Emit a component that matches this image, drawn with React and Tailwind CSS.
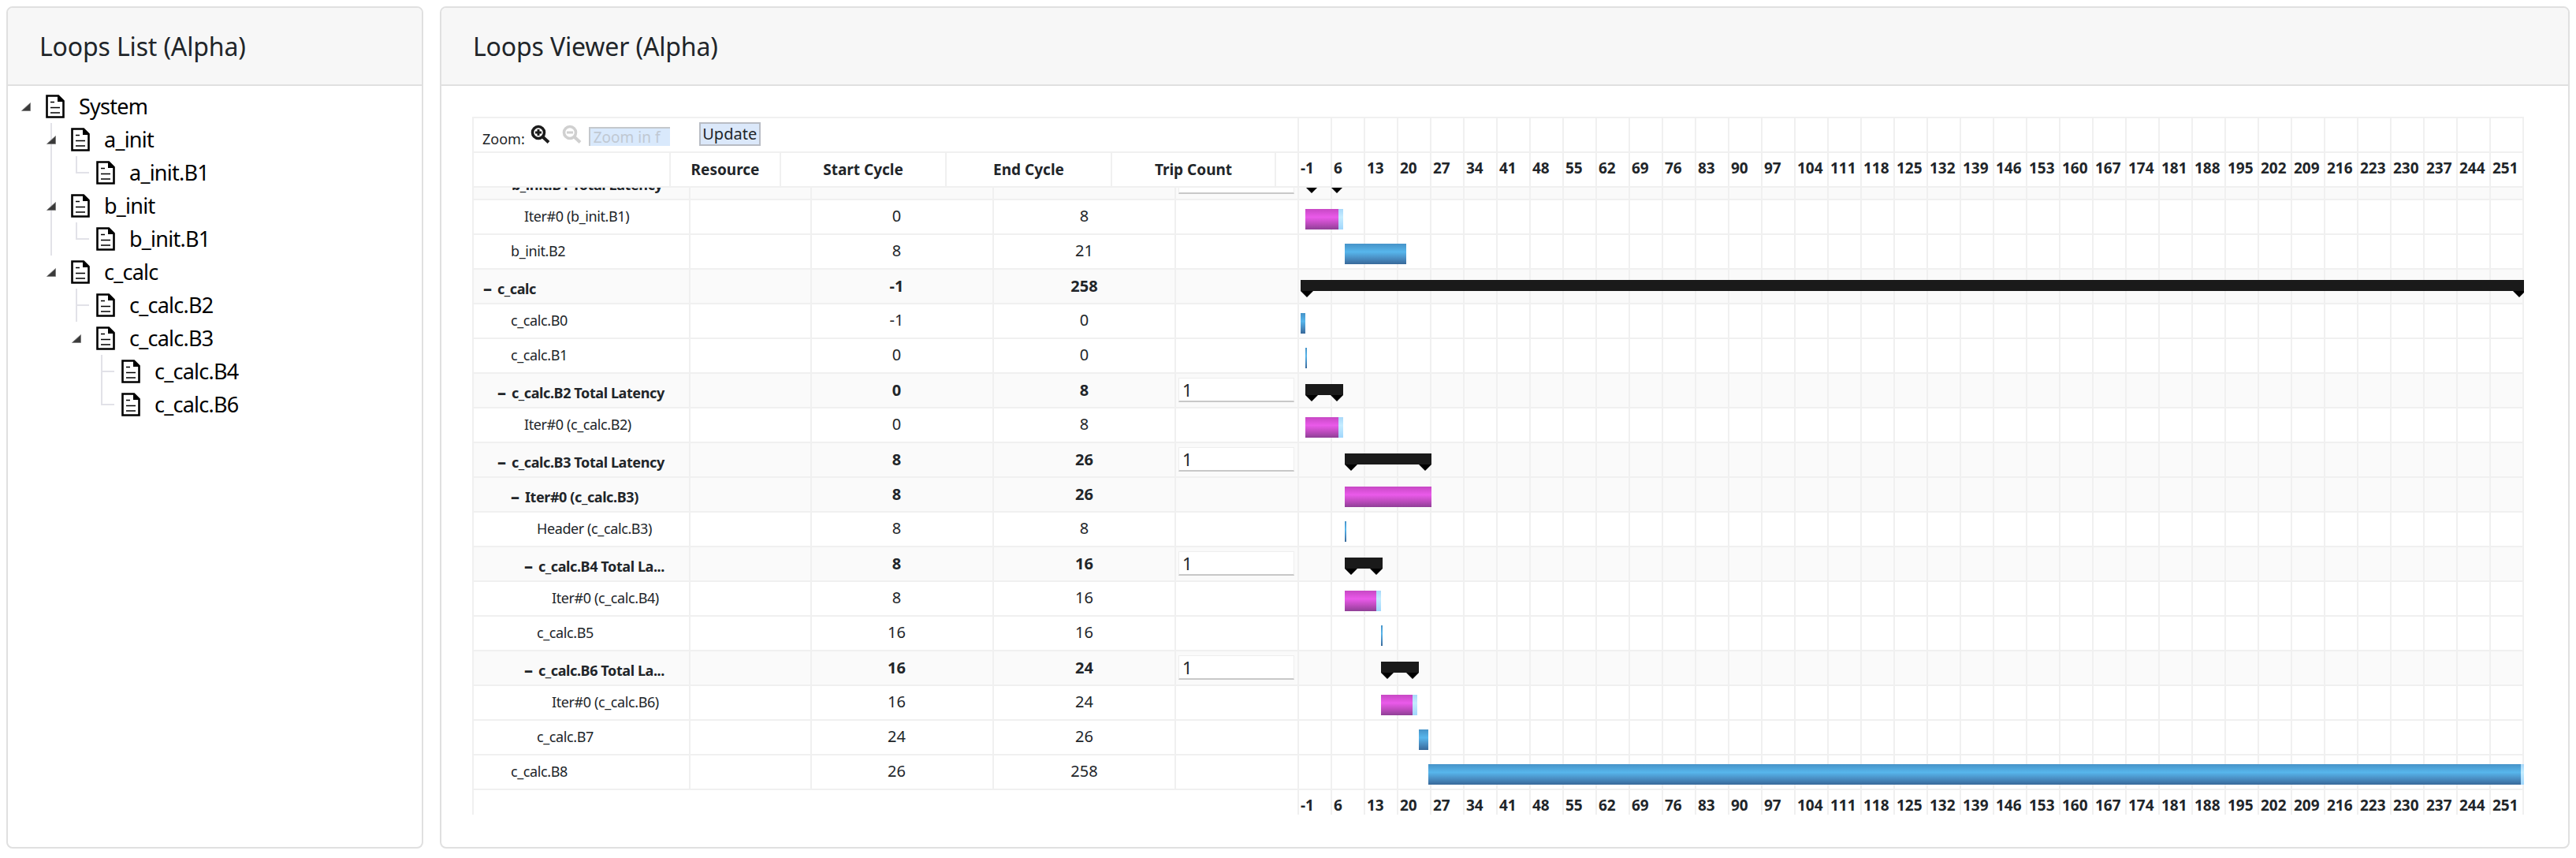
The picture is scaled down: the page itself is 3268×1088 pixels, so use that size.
const FONT = "font-['Noto_Sans','Open_Sans',sans-serif]";
const ticks = Array.from({ length: 37 }, (_, i) => -1 + i * 7);

const BLUE = "bg-[linear-gradient(180deg,#4693c8_0%,#57b6ec_40%,#4a8fc4_70%,#38699a_100%)]";
const PINK = "bg-[linear-gradient(180deg,#c748c4_0%,#ea5aea_40%,#c04cc0_70%,#8f3f96_100%)]";
const LIGHT = "bg-[linear-gradient(180deg,#a8d8fa_0%,#c4ecff_40%,#a0d6fc_100%)]";

const rows = [
  { n: "b_init.B1 Total Latency", dash: true, pl: "pl-[30px]", s: "", e: "", bold: true, trip: true, black: [1656, 1704] },
  { n: "Iter#0 (b_init.B1)", pl: "pl-[64px]", s: "0", e: "8", pink: [1656, 1704] },
  { n: "b_init.B2", pl: "pl-[47px]", s: "8", e: "21", blue: [1706, 1784] },
  { n: "c_calc", dash: true, pl: "pl-[12px]", s: "-1", e: "258", bold: true, black: [1650, 3204] },
  { n: "c_calc.B0", pl: "pl-[47px]", s: "-1", e: "0", blue: [1650, 1656] },
  { n: "c_calc.B1", pl: "pl-[47px]", s: "0", e: "0", blue: [1656, 1658] },
  { n: "c_calc.B2 Total Latency", dash: true, pl: "pl-[30px]", s: "0", e: "8", bold: true, trip: true, black: [1656, 1704] },
  { n: "Iter#0 (c_calc.B2)", pl: "pl-[64px]", s: "0", e: "8", pink: [1656, 1704] },
  { n: "c_calc.B3 Total Latency", dash: true, pl: "pl-[30px]", s: "8", e: "26", bold: true, trip: true, black: [1706, 1816] },
  { n: "Iter#0 (c_calc.B3)", dash: true, pl: "pl-[47px]", s: "8", e: "26", bold: true, pink: [1706, 1816], noLight: true },
  { n: "Header (c_calc.B3)", pl: "pl-[80px]", s: "8", e: "8", blue: [1706, 1708] },
  { n: "c_calc.B4 Total La...", dash: true, pl: "pl-[64px]", s: "8", e: "16", bold: true, trip: true, black: [1706, 1754] },
  { n: "Iter#0 (c_calc.B4)", pl: "pl-[99px]", s: "8", e: "16", pink: [1706, 1752] },
  { n: "c_calc.B5", pl: "pl-[80px]", s: "16", e: "16", blue: [1752, 1754] },
  { n: "c_calc.B6 Total La...", dash: true, pl: "pl-[64px]", s: "16", e: "24", bold: true, trip: true, black: [1752, 1800] },
  { n: "Iter#0 (c_calc.B6)", pl: "pl-[99px]", s: "16", e: "24", pink: [1752, 1798] },
  { n: "c_calc.B7", pl: "pl-[80px]", s: "24", e: "26", blue: [1800, 1812] },
  { n: "c_calc.B8", pl: "pl-[47px]", s: "26", e: "258", blue: [1812, 3204], end: true },
];

const tree = [
  { t: "System", g: [], arrow: true },
  { t: "a_init", g: [null], arrow: true, line: true },
  { t: "a_init.B1", g: [null, "v", "l"] },
  { t: "b_init", g: [null], arrow: true, line: true },
  { t: "b_init.B1", g: [null, "v", "l"] },
  { t: "c_calc", g: [null], arrow: true },
  { t: "c_calc.B2", g: [null, null, "t"] },
  { t: "c_calc.B3", g: [null, null], arrow: true },
  { t: "c_calc.B4", g: [null, null, null, "t"] },
  { t: "c_calc.B6", g: [null, null, null, "l"] },
];

function DocIcon() {
  return (
    <svg width="24" height="30" viewBox="0 0 24 30" className="shrink-0">
      <path d="M1.5 1.5H16L22.5 8V28.5H1.5Z" fill="#fff" stroke="#000" strokeWidth="2.6" />
      <path d="M15 1L23 9H15Z" fill="#000" />
      <path d="M6 9.5H11M6 16.5H18M6 23H18" stroke="#000" strokeWidth="1.6" />
    </svg>
  );
}

function Guide({ kind }) {
  return (
    <span className="relative block h-[42px] w-[32px] shrink-0">
      {kind === "v" && <span className="absolute left-[15px] top-0 h-[42px] w-[2px] bg-[#e2e2e8]" />}
      {kind === "t" && <span className="absolute left-[15px] top-0 h-[42px] w-[2px] bg-[#e2e2e8]" />}
      {kind === "l" && <span className="absolute left-[15px] top-0 h-[21px] w-[2px] bg-[#e2e2e8]" />}
      {(kind === "l" || kind === "t") && <span className="absolute left-[15px] top-[20px] h-[2px] w-[17px] bg-[#e2e2e8]" />}
    </span>
  );
}

function Arrow({ line }) {
  return (
    <span className="relative flex h-[42px] w-[32px] shrink-0 items-center justify-center">
      {line && <span className="absolute left-[15px] top-0 h-[42px] w-[2px] bg-[#e2e2e8]" />}
      <svg width="12" height="11" viewBox="0 0 12 11" className="relative">
        <path d="M0.5 10.5H11.5V0.5Z" fill="#3a3a3a" stroke="#777" strokeWidth="0.8" />
      </svg>
    </span>
  );
}

function TreeRow({ r }) {
  return (
    <div className="flex h-[42px] items-center">
      {r.g.map((k, i) => (
        <Guide key={i} kind={k} />
      ))}
      {r.arrow ? <Arrow line={r.line} /> : null}
      <span className="ml-[9px]">
        <DocIcon />
      </span>
      <span className="ml-[18px] text-[27px] leading-[42px] tracking-[-0.75px] text-black">{r.t}</span>
    </div>
  );
}

function Card({ title, className, children }) {
  return (
    <div className={`flex flex-col overflow-hidden rounded-[8px] border-2 border-[#e0e0e0] bg-white ${className}`}>
      <div className="flex h-[99px] shrink-0 items-center border-b-2 border-[#e0e0e0] bg-[#f7f7f7] pl-[40px] text-[32px] tracking-[-0.15px] text-[#212529]">
        {title}
      </div>
      {children}
    </div>
  );
}

function MagIcon({ color, plus }) {
  return (
    <svg width="25" height="24" viewBox="0 0 25 24" className="shrink-0">
      <circle cx="10" cy="10" r="7.5" fill="none" stroke={color} strokeWidth="3.6" />
      <path d="M15.5 15.5L23 22.5" stroke={color} strokeWidth="4" />
      <path d={plus ? "M6 10H14M10 6V14" : "M6 10H14"} stroke={color} strokeWidth="3" />
    </svg>
  );
}

function Grid({ labels }) {
  return (
    <div className="flex border-r-2 border-[#f0f0f0]">
      {ticks.map((t) => (
        <div key={t} className="h-[42px] w-[42px] shrink-0 border-l-2 border-[#f0f0f0] pl-[2px] text-[19px] font-bold leading-[38px] text-[#212529]">
          {labels ? t : ""}
        </div>
      ))}
    </div>
  );
}

function Marker({ left }) {
  return (
    <svg width="16" height="8" viewBox="0 0 16 8" className="absolute top-[27px]" style={{ left }}>
      <path d="M0 0H16L8 8Z" fill="#000" />
    </svg>
  );
}

function Bars({ r }) {
  const ox = 1646;
  if (r.black) {
    const [a, b] = r.black;
    return (
      <>
        <div className="absolute top-[13px] h-[14px] bg-[#1a1a1a]" style={{ left: a - ox, width: b - a }} />
        <Marker left={a - ox} />
        <Marker left={b - ox - 16} />
      </>
    );
  }
  const pair = r.pink || r.blue;
  if (!pair) return null;
  const [a, b] = pair;
  const fill = r.pink ? PINK : BLUE;
  const light = r.end || (r.pink && !r.noLight);
  return (
    <>
      <div className={`absolute top-[11px] h-[26px] ${fill}`} style={{ left: a - ox, width: b - a }} />
      {light && <div className={`absolute top-[11px] h-[26px] ${LIGHT}`} style={{ left: b - ox - 6, width: 6 }} />}
    </>
  );
}

function Row({ r, first }) {
  const bg = r.bold ? "bg-[#fafafa]" : "bg-white";
  const w = r.bold ? "font-bold" : "font-normal";
  const cell = "h-[42px] shrink-0 border-l-2 border-[#f0f0f0]";
  const num = r.bold ? "leading-[41px]" : "leading-[40px]";
  return (
    <div className={`relative flex h-[44px] border-b-2 border-[#f0f0f0] text-[#212529] ${bg} ${w} ${first ? "mt-[-28px]" : ""}`}>
      <div className={`${cell} w-[275px] whitespace-nowrap text-[18px] tracking-[-0.4px] ${r.bold ? "leading-[44px]" : "leading-[40px]"} ${r.pl}`}>
        {r.dash && <span className="mr-[3px] text-[22px] font-extrabold">–</span>}
        {r.dash ? " " : ""}
        {r.n}
      </div>
      <div className={`${cell} w-[154px]`} />
      <div className={`${cell} w-[231px] pr-[14px] text-center text-[20px] ${num}`}>{r.s}</div>
      <div className={`${cell} w-[231px] text-center text-[20px] ${num}`}>{r.e}</div>
      <div className={`${cell} w-[156px] pl-[3px] pt-[5px]`}>
        {r.trip && (
          <input
            readOnly
            defaultValue={first ? "" : "1"}
            className="block h-[31px] w-[147px] border border-b-2 border-[#eeeeee] border-b-[#c8c8c8] bg-white pl-[4px] text-[22px] font-normal leading-[29px] text-[#212529] outline-none"
          />
        )}
      </div>
      <div className="relative">
        <Grid />
        <Bars r={r} />
      </div>
    </div>
  );
}

export default function App() {
  return (
    <div className={`flex h-[1088px] w-[3268px] gap-[21px] bg-white pb-[12px] pl-[8px] pr-[8px] pt-[8px] ${FONT}`}>
      <Card title="Loops List (Alpha)" className="w-[529px]">
        <div className="pl-[7px] pt-[5px]">
          {tree.map((r) => (
            <TreeRow key={r.t} r={r} />
          ))}
        </div>
      </Card>
      <Card title="Loops Viewer (Alpha)" className="flex-1">
        <div className="pl-[39px] pt-[39px]">
          <div className="w-[2603px] border-t-2 border-[#f0f0f0]">
            <div className="flex h-[44px] border-b-2 border-[#f0f0f0]">
              <div className="flex h-[42px] w-[1047px] shrink-0 items-start border-l-2 border-[#f0f0f0]">
                <span className="ml-[11px] mt-[10px] text-[18px] leading-[32px] text-[#212529]">Zoom:</span>
                <span className="ml-[7px] mt-[8px]"><MagIcon color="#1c1c1c" plus /></span>
                <span className="ml-[15px] mt-[8px]"><MagIcon color="#d0d0d0" /></span>
                <input
                  readOnly
                  placeholder="Zoom in f"
                  className="ml-[9px] mt-[11px] h-[24px] w-[103px] border-l-2 border-t-2 border-[#c4c8cc] bg-[#d9e9fc] pl-[4px] text-[19px] text-[#212529] outline-none placeholder:text-[#c0c8d2]"
                />
                <div className="ml-[37px] mt-[5px] flex h-[30px] w-[78px] items-center justify-center border-2 border-[#b8bcc4] bg-[#dbe8fa] text-[20px] text-[#212529]">
                  Update
                </div>
              </div>
              <Grid />
            </div>
            <div className="relative z-10 flex h-[44px] border-b-2 border-[#f0f0f0] bg-white text-[19px] font-bold leading-[42px] text-[#212529]">
              <div className="h-[42px] w-[250px] shrink-0 border-l-2 border-[#f0f0f0]" />
              <div className="h-[42px] w-[140px] shrink-0 border-l-2 border-[#f0f0f0] text-center">Resource</div>
              <div className="h-[42px] w-[210px] shrink-0 border-l-2 border-[#f0f0f0] text-center">Start Cycle</div>
              <div className="h-[42px] w-[210px] shrink-0 border-l-2 border-[#f0f0f0] text-center">End Cycle</div>
              <div className="h-[42px] w-[210px] shrink-0 border-x-2 border-[#f0f0f0] text-center">Trip Count</div>
              <div className="w-[27px] shrink-0" />
              <Grid labels />
            </div>
            <div className="h-[764px] overflow-hidden">
              {rows.map((r, i) => (
                <Row key={r.n} r={r} first={i === 0} />
              ))}
            </div>
            <div className="flex h-[31px] overflow-hidden">
              <div className="w-[1047px] shrink-0 border-l-2 border-[#f0f0f0]" />
              <div className="flex border-r-2 border-[#f0f0f0]">
                {ticks.map((t) => (
                  <div key={t} className="h-[31px] w-[42px] shrink-0 border-l-2 border-[#f0f0f0] pl-[2px] text-[19px] font-bold leading-[38px] text-[#212529]">
                    {t}
                  </div>
                ))}
              </div>
            </div>
          </div>
        </div>
      </Card>
    </div>
  );
}
